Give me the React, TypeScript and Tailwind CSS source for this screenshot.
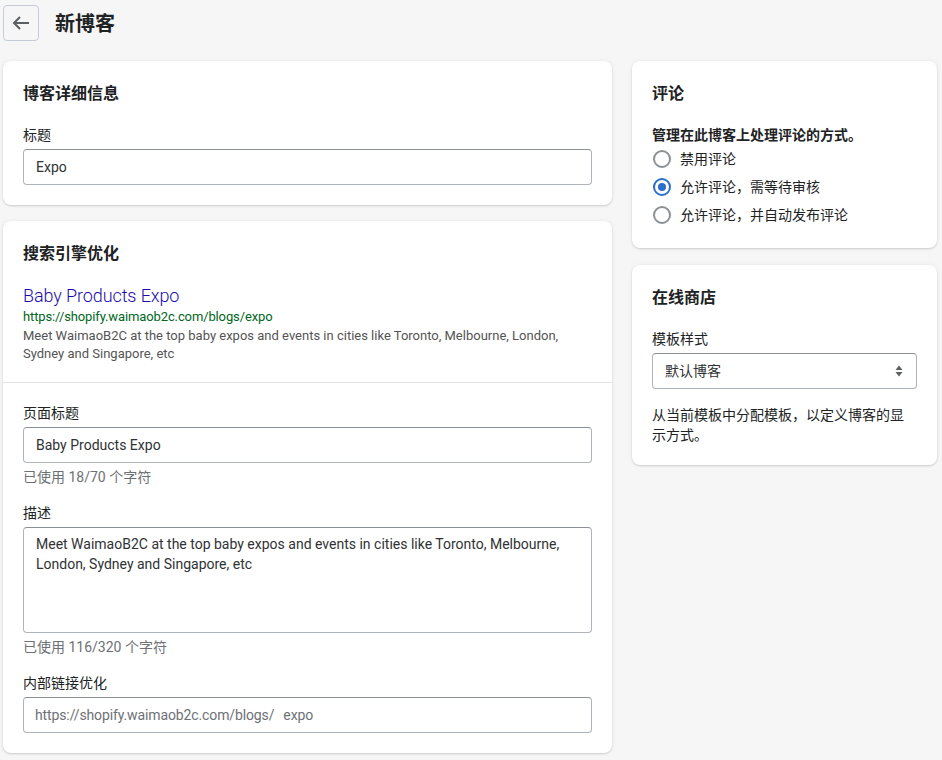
const font = "font-['Roboto','Noto_Sans_CJK_SC',sans-serif]";

function Card({ children, className = "" }: { children: React.ReactNode; className?: string }) {
  return (
    <section className={`rounded-lg bg-white shadow-[0_0_5px_rgba(23,24,24,0.05),0_1px_2px_rgba(0,0,0,0.15)] ${className}`}>
      {children}
    </section>
  );
}

function Heading({ children }: { children: React.ReactNode }) {
  return <h2 className="h-6 pt-px text-base font-bold leading-6 text-[#202223]">{children}</h2>;
}

function Field({ label, children }: { label: string; children: React.ReactNode }) {
  return (
    <div>
      <div className="mb-[4px] h-5 text-sm leading-5 text-[#202223]">{label}</div>
      {children}
    </div>
  );
}

function Input({ children, className = "" }: { children: React.ReactNode; className?: string }) {
  return (
    <div className={`flex h-9 items-center rounded-[4px] border border-[#aeb4b9] border-t-[#898f94] bg-white px-3 text-sm text-[#303233] ${className}`}>
      {children}
    </div>
  );
}

function Radio({ label, checked }: { label: string; checked?: boolean }) {
  return (
    <div className="ml-px flex h-7 items-center gap-[9px] text-sm text-[#202223]">
      {checked ? (
        <span className="flex h-[18px] w-[18px] items-center justify-center rounded-full border-2 border-[#2c6ecb]">
          <span className="h-2 w-2 rounded-full bg-[#2c6ecb]" />
        </span>
      ) : (
        <span className="h-[18px] w-[18px] rounded-full border-2 border-[#8c9196]" />
      )}
      <span>{label}</span>
    </div>
  );
}

export default function App() {
  return (
    <div className={`${font} h-[760px] overflow-hidden bg-[#f6f6f7] pl-[3px] pr-[5px] pt-[5px]`}>
      {/* Header */}
      <header className="flex h-9 items-center gap-4">
        <button className="flex h-9 w-9 items-center justify-center rounded-[4px] border border-[#c4cdd5] bg-[#f6f6f7] text-[#5c5f62]">
          <svg width="20" height="20" viewBox="0 0 20 20" fill="none" stroke="currentColor" strokeWidth="2">
            <path d="M18 10H3M9 4l-6 6 6 6" />
          </svg>
        </button>
        <h1 className="pt-[2px] text-xl font-bold text-[#202223]">新博客</h1>
      </header>

      <div className="mt-5 flex gap-5">
        {/* Left column */}
        <div className="flex w-[609px] flex-col gap-4">
          <Card className="h-[144px] px-5 pt-5">
            <Heading>博客详细信息</Heading>
            <div className="mt-5">
              <Field label="标题">
                <Input>Expo</Input>
              </Field>
            </div>
          </Card>

          <Card className="h-[532px]">
            <div className="h-[162px] border-b border-[#e1e3e5] px-5 pt-5">
              <Heading>搜索引擎优化</Heading>
              <div className="mt-[17px] h-[26px] text-lg font-light leading-7 tracking-[-0.1px] text-[#1a0dab]">Baby Products Expo</div>
              <div className="h-[19px] text-[13px] leading-[18px] tracking-[-0.12px] text-[#006621]">https://shopify.waimaob2c.com/blogs/expo</div>
              <p className="text-[13px] leading-[18px] text-[#545454]">
                Meet WaimaoB2C at the top baby expos and events in cities like Toronto, Melbourne, London, Sydney and Singapore, etc
              </p>
            </div>
            <div className="px-5 pt-[20px]">
              <Field label="页面标题">
                <Input>Baby Products Expo</Input>
              </Field>
              <div className="mt-1 h-5 text-sm leading-5 text-[#6d7175]">已使用 18/70 个字符</div>
              <div className="mt-[16px]">
                <Field label="描述">
                  <div className="h-[106px] rounded-[4px] border border-[#aeb4b9] border-t-[#898f94] px-3 py-[6px] text-sm leading-[20px] text-[#303233]">
                    Meet WaimaoB2C at the top baby expos and events in cities like Toronto, Melbourne, London, Sydney and Singapore, etc
                  </div>
                </Field>
              </div>
              <div className="mt-1 h-5 text-sm leading-5 text-[#6d7175]">已使用 116/320 个字符</div>
              <div className="mt-[16px]">
                <Field label="内部链接优化">
                  <Input>
                    <span className="-ml-px tracking-[-0.12px] text-[#6d7175]">https://shopify.waimaob2c.com/blogs/</span>
                    <span className="ml-[9px] tracking-[-0.12px] text-[#6d7175]">expo</span>
                  </Input>
                </Field>
              </div>
            </div>
          </Card>
        </div>

        {/* Right column */}
        <div className="flex w-[305px] flex-col gap-[17px]">
          <Card className="h-[187px] px-5 pt-5">
            <Heading>评论</Heading>
            <div className="mt-5 h-5 text-sm font-semibold leading-5 text-[#202223]">管理在此博客上处理评论的方式。</div>
            <Radio label="禁用评论" />
            <Radio label="允许评论，需等待审核" checked />
            <Radio label="允许评论，并自动发布评论" />
          </Card>

          <Card className="h-[200px] px-5 pt-5">
            <Heading>在线商店</Heading>
            <div className="mt-5">
              <Field label="模板样式">
                <Input className="justify-between">
                  <span>默认博客</span>
                  <svg width="8" height="12" viewBox="0 0 8 12" fill="#5c5f62" className="mr-[1px]">
                    <path d="M4 0.5 7.5 5H0.5zM4 11.5 0.5 7h7z" />
                  </svg>
                </Input>
              </Field>
            </div>
            <p className="mt-4 text-sm leading-5 text-[#202223]">从当前模板中分配模板，以定义博客的显示方式。</p>
          </Card>
        </div>
      </div>
    </div>
  );
}
